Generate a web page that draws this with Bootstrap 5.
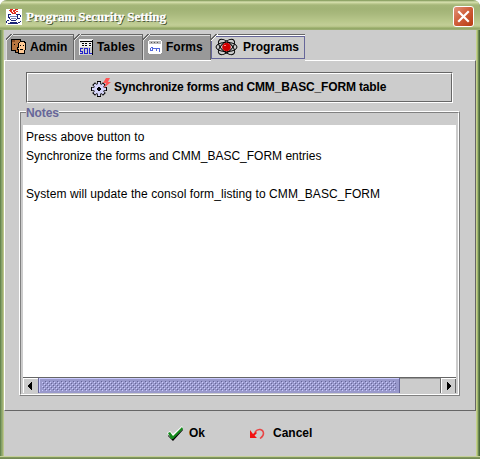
<!DOCTYPE html>
<html lang="en">
<head>
<meta charset="utf-8">
<title>Program Security Setting</title>
<link href="https://cdn.jsdelivr.net/npm/bootstrap@5.3.0/dist/css/bootstrap.min.css" rel="stylesheet">
<style>
body{width:480px;height:459px;overflow:hidden;background:#fff;color:#000;font:12px/19px "Liberation Sans",Arial,sans-serif}
svg{flex:none;display:block}
.frame{width:480px;height:459px;padding:0 4px 3px;border-radius:7px 7px 0 0;
 background:linear-gradient(#c5d09a,#c5d09a) 0 456px/480px 1px no-repeat,linear-gradient(#879e60,#6d8352) 0 457px/480px 2px no-repeat,linear-gradient(90deg,#68864e 0 1px,#84a16b 1px 2px,#9cad70 2px 3px,#b7c68c 3px 4px,#ccc 4px 476px,#c4d18d 476px 477px,#a4b66f 477px 478px,#6b8854 478px 479px,#4c6838 479px)}
.titlebar{height:30px;margin:0 -4px;padding:3px 6px 0 6px;border-radius:7px 7px 0 0;background:linear-gradient(#80995a 0,#a0b176 1px,#dbe4b5 2px,#c6d29a 3px,#a5b679 5px,#a1b375 9px,#a9b97d 14px,#b8c78b 21px,#c2ce96 25px,#b4c386 27px,#91a663 28px,#a0b078 30px)}
.title{font:bold 13px/18px "Liberation Serif",serif;color:#fff;text-shadow:1px 1px 0 #3c4826;margin-left:4px;white-space:nowrap;letter-spacing:-.06px;-webkit-text-stroke:.3px #fff}
.shut{width:21px;height:21px;border:1px solid #fff;border-radius:3px;background:linear-gradient(135deg,#e2947c,#d0603c 45%,#b83c12)}
.client{height:426px;background:#ccc}
.strip{height:30px;padding:4px 0 0 2px}
.tabx{height:26px;font-weight:bold;line-height:24px;white-space:nowrap;padding-left:5px;border-right:1px solid #666;
 background:linear-gradient(135deg,#ccc 0 3.5px,#666 3.5px 4.3px,#eee 4.3px 5.2px,transparent 5.2px) 0 0/8px 8px no-repeat,linear-gradient(#666,#666) 7px 0/100% 1px no-repeat,linear-gradient(#ddd,#ddd) 7px 1px/100% 1px no-repeat,linear-gradient(#ddd,#ddd) 0 7px/1px 100% no-repeat,#999}
.tabx:first-child{padding-left:4px}
.tabx svg{margin-top:-1px}
.tabx.on{height:27px;z-index:1;padding-left:4px;border-right:0;background:linear-gradient(135deg,#ccc 0 3.5px,#666 3.5px 4.3px,#fff 4.3px 5.2px,transparent 5.2px) 0 0/8px 8px no-repeat,linear-gradient(#666,#666) 6px 0/100% 1px no-repeat,linear-gradient(#fff,#fff) 6px 1px/100% 1px no-repeat,linear-gradient(#669,#669) 5px 2px/100% 1px no-repeat,linear-gradient(#669,#669) 0 7px/1px 18px no-repeat,linear-gradient(#669,#669) 100% 2px/1px 23px no-repeat,linear-gradient(#669,#669) 0 24px/100% 1px no-repeat,#ccc}
.w-admin{width:68px}.w-tables{width:69px}.w-forms{width:68px}.w-programs{width:94px}
.w-admin .lbl{margin-left:3px}.w-tables .lbl{margin-left:3px;letter-spacing:.15px}.w-forms .lbl{margin-left:4px}.w-programs .lbl{margin-left:5px;margin-top:-2px}
.panelx{height:351px;border:1px solid;border-color:#fff #666 #666 #fff;padding:11px 15px 0 14px}
.sync{height:31px;width:427px;margin-left:7px;border:1px solid;border-color:#666 #fff #fff #666;font-weight:bold}
.syncface{height:29px;border:1px solid;border-color:#fff #666 #666 #fff;padding-left:63px}
.sl{margin-left:3px;letter-spacing:-.16px;white-space:nowrap}
.notes{width:441px;height:285px;margin-top:8px;border:1px solid;border-color:#fff #808080 #808080 #fff}
.etch{height:283px;border:1px solid;border-color:#808080 #fff #fff #808080;padding:0 2px 1px}
.legendx{display:flow-root;height:12px;font-weight:bold;color:#669}
.legendx span{display:block;width:33px;margin:-7px 0 0 3px;background:#ccc;letter-spacing:-.1px;height:14px;line-height:14px}
.area{width:433px;height:252px;background:#fff;padding:3px 3px;white-space:pre;letter-spacing:.08px}
.area .tight{letter-spacing:0}
.scroll{width:433px;height:16px;border-top:1px solid #666}
.arrow{width:15px;height:15px;border-left:1px solid #fff;border-top:1px solid #fff}
.thumb{width:362px;height:15px}
.track{width:41px;border-top:1px solid #999;border-right:1px solid #666}
.foot{height:45px;padding:0 0 0 163px;font-weight:bold;line-height:45px}
.okl{margin-left:5px}.undo{margin-left:45px}.cnl{margin-left:8px}
</style>
<script src="https://cdn.jsdelivr.net/npm/bootstrap@5.3.0/dist/js/bootstrap.bundle.min.js"></script>
</head>
<body>
<div class="frame">
<header class="titlebar d-flex align-items-center">
<svg width="16" height="16" viewBox="0 0 16 16" shape-rendering="crispEdges"><path fill="#fff" d="M0 0h16v16H0z"/><g fill="none"><path stroke="#e03020" d="M4 .5h3M9 .5h3M3 1.500h3M7 1.500h3M4 2.500h2M7 2.500h2M10 2.500h2M5 3.500h2M8 3.500h2M6 4.500h4"/><path stroke="#1a2478" d="M2.500 5v4M3 5.500h2M10 5.500h4M3.500 8v2M4 10.500h1M5 11.500h5M10 10.500h1M11.500 6v4M14.500 6v2M12 9.500h2M1 11.500h2M.5 12v2M2 14.500h10M4 13.500h7M12 13.500h2M14 12.500h1"/><path stroke="#7785b8" d="M4 7.500h7M5 9.500h5"/></g></svg>
<span class="title">Program Security Setting</span>
<span class="shut ms-auto"><svg width="19" height="19" viewBox="0 0 19 19"><path d="M5 5l9 9M14 5l-9 9" stroke="#fff" stroke-width="2.200" stroke-linecap="square"/></svg></span>
</header>
<main class="client">
<nav class="strip d-flex">
<div class="tabx w-admin d-flex align-items-center"><svg width="17" height="17" viewBox="0 0 17 17" shape-rendering="crispEdges"><path fill="#ba753e" stroke="#000" d="M1.500 1.500h9v11l-2 2h-3v-2h-4z"/><path fill="#8c4d22" d="M2 2h3v2H2z"/><path fill="#ffc994" stroke="#000" d="M8.500 5.500l2-2h4l1 2v6l-1 1v3h-6v-3l-1-2 1-2z"/><path d="M4 6h1v1H4zM10 7h1v1h-1zM13 7h1v1h-1zM10 11h3v1h-3z"/></svg><span class="lbl">Admin</span></div>
<div class="tabx w-tables d-flex align-items-center"><svg width="15" height="16" viewBox="0 0 15 16" shape-rendering="crispEdges"><path fill="#f0f0f0" d="M0 0h14v16H0z"/><path d="M1 2h12v1H1zM13 1h1v15h-1zM3 4h2v1H3zM6 4h2v1H6zM10 4h2v1h-2zM3 6h2v1H3zM6 6h2v1H6zM10 6h2v1h-2z"/><path fill="#ccc" d="M1 3h2v1H1zM1 8h12v8H1z"/><path fill="none" stroke="#22c" d="M4 9.500H1.500v2.500h2v2.500H1M5.500 9v6M6 9.500h2.500V15M5 14.500h4M10.500 9v5.500H13"/></svg><span class="lbl">Tables</span></div>
<div class="tabx w-forms d-flex align-items-center"><svg width="14" height="14" viewBox="0 0 14 14" shape-rendering="crispEdges"><path fill="#fff" d="M1 0h12v1h1v12h-1v1H1v-1H0V1h1z"/><path fill="#bbb" d="M1 1h12v3H1z"/><path fill="#555" d="M3 2h1v1H3zM6 2h1v1H6zM9 2h1v1H9z"/><path fill="none" stroke="#5267dc" d="M2.500 7.500h2v3h-2v-3M5 8.500h7M8.500 9v2M11.500 9v3"/></svg><span class="lbl">Forms</span></div>
<div class="tabx on w-programs d-flex align-items-center"><svg width="23" height="18" viewBox="0 0 23 18"><g fill="none" stroke="#000"><ellipse cx="11.500" cy="9" rx="10.500" ry="4.700"/><ellipse cx="11.500" cy="9" rx="10" ry="5" transform="rotate(42 11.500 9)"/><ellipse cx="11.500" cy="9" rx="10" ry="5" transform="rotate(-42 11.500 9)"/></g><circle cx="11.500" cy="9" r="4.300" fill="#d00000"/><path fill="#ff8080" d="M9 7h2v1H9z"/></svg><span class="lbl">Programs</span></div>
</nav>
<section class="panelx">
<div class="sync"><div class="syncface d-flex align-items-center"><svg width="20" height="20" viewBox="0 0 20 20"><g fill="none"><path stroke="#000" stroke-width="4" d="M8 3v16M0 11h16M2.600 5.600l10.800 10.800M13.400 5.600L2.600 16.400"/><circle cx="8" cy="11" r="5" fill="#ccccef"/><path stroke="#d6d6fa" stroke-width="2.400" d="M8 4v14M1 11h14M3.300 6.300l9.400 9.400M12.700 6.300l-9.400 9.400"/></g><path d="M7 9h2v1h1v2H9v1H7v-1H6v-2h1z"/><path fill="#ff5555" d="M15 0h4l-2 4h3l-7 6 2-5h-3z"/></svg><span class="sl">Synchronize forms and CMM_BASC_FORM table</span></div></div>
<div class="notes"><div class="etch"><div class="legendx"><span>Notes</span></div>
<div class="area"><div>Press above button to</div><div class="tight">Synchronize the forms and CMM_BASC_FORM entries</div><div>&nbsp;</div><div>System will update the consol form_listing to CMM_BASC_FORM</div></div>
<div class="scroll d-flex"><div class="arrow"><svg width="13" height="13" shape-rendering="crispEdges"><path d="M4 6h1V5h1V4h1V3h1v8H7v-1H6V9H5V8H4z"/></svg></div>
<svg class="thumb" width="362" height="15" shape-rendering="crispEdges"><defs><pattern id="grip" width="4" height="4" patternUnits="userSpaceOnUse"><path fill="#ccf" d="M0 0h1v1H0zM2 2h1v1H2z"/><path fill="#669" d="M1 1h1v1H1zM3 3h1v1H3z"/></pattern></defs><path fill="#99c" d="M0 0h362v15H0z"/><path fill="#669" d="M0 0h1v15H0zM361 0h1v15h-1z"/><path fill="#ccf" d="M1 0h360v1H2v13H1z"/><path fill="url(#grip)" d="M4 3h354v10H4z"/></svg>
<div class="track"></div><div class="arrow"><svg width="14" height="14" shape-rendering="crispEdges"><path d="M5 3h1v1h1v1h1v1h1v2H8v1H7v1H6v1H5z"/><path fill="#666" d="M13 0h1v14h-1z"/></svg></div></div>
</div></div>
</section>
<footer class="foot d-flex align-items-center">
<svg width="17" height="15" viewBox="0 0 17 15"><path fill="#fff" d="M0 7l3-2 3 3 9-8 1 2L5 13z"/><path d="M1 9l4 4L16 3v1L6 15 1 10z"/><path fill="#148a1c" d="M1 7l2-1 3 4 9-9 1 2L6 13 4 13z"/></svg><span class="okl">Ok</span>
<svg class="undo" width="15" height="12" viewBox="0 0 15 12"><path fill="#f31212" d="M0 2v8h7L4.500 7.500 7 5 5.500 3.500 3 6z"/><path fill="none" stroke="#e84545" stroke-width="1.500" d="M5 4c3-4 8-3 8.500 1 .3 3-1.500 4-3.500 5.500"/></svg><span class="cnl">Cancel</span>
</footer>
</main>
</div>
</body>
</html>
